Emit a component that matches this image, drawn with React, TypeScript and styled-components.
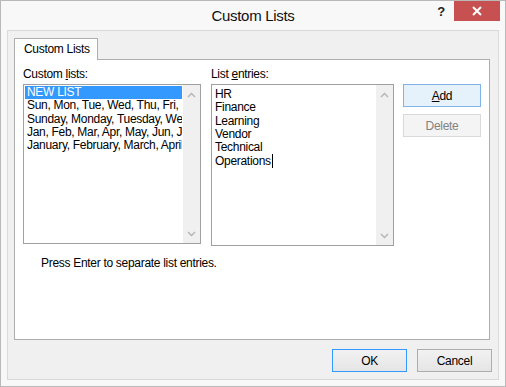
import styled, { createGlobalStyle } from "styled-components";

const GlobalStyle = createGlobalStyle`
  body {
    margin: 0;
    font-family: "Liberation Sans", Arial, sans-serif;
    font-size: 12px;
    letter-spacing: -0.3px;
    color: #000;
  }
`;

const customLists = [
  "NEW LIST",
  "Sun, Mon, Tue, Wed, Thu, Fri, Sat",
  "Sunday, Monday, Tuesday, Wednesday",
  "Jan, Feb, Mar, Apr, May, Jun, Jul",
  "January, February, March, April",
];

const entries = ["HR", "Finance", "Learning", "Vendor", "Technical", "Operations"];

const Chevron = ({ up }: { up?: boolean }) => (
  <svg width="9" height="6" viewBox="0 0 9 6">
    <polyline
      points={up ? "1,5 4.5,1.5 8,5" : "1,1 4.5,4.5 8,1"}
      fill="none"
      stroke="#b4b4b4"
      strokeWidth="1.4"
    />
  </svg>
);

const App = () => {
  return (
    <>
      <GlobalStyle />
      <Window>
        <TitleBar>
          <span />
          <Title>Custom Lists</Title>
          <Controls>
            <Help>?</Help>
            <CloseButton>
              <svg width="10" height="10" viewBox="0 0 10 10">
                <path d="M1 1 L9 9 M9 1 L1 9" stroke="#fff" strokeWidth="2" />
              </svg>
            </CloseButton>
          </Controls>
        </TitleBar>
        <Client>
          <TabStrip>
            <Tab>Custom Lists</Tab>
          </TabStrip>
          <Panel>
            <Columns>
              <Column $width={178}>
                <Label>
                  Custom <u>l</u>ists:
                </Label>
                <ListBox $height={160}>
                  <Rows>
                    {customLists.map((item, i) => (
                      <Row key={item} $selected={i === 0}>
                        {item}
                      </Row>
                    ))}
                  </Rows>
                  <ScrollTrack>
                    <Chevron up />
                    <Chevron />
                  </ScrollTrack>
                </ListBox>
              </Column>
              <Column $width={185}>
                <Label>
                  List <u>e</u>ntries:
                </Label>
                <ListBox $height={162}>
                  <Rows>
                    {entries.map((item, i) => (
                      <Entry key={item}>
                        {item}
                        {i === entries.length - 1 && <Caret />}
                      </Entry>
                    ))}
                  </Rows>
                  <ScrollTrack>
                    <Chevron up />
                    <Chevron />
                  </ScrollTrack>
                </ListBox>
              </Column>
              <ButtonColumn>
                <SideButton $variant="hot">
                  <u>A</u>dd
                </SideButton>
                <SideButton $variant="disabled">Delete</SideButton>
              </ButtonColumn>
            </Columns>
            <Hint>Press Enter to separate list entries.</Hint>
          </Panel>
          <Footer>
            <DialogButton $default>OK</DialogButton>
            <DialogButton>Cancel</DialogButton>
          </Footer>
        </Client>
      </Window>
    </>
  );
};

const Window = styled.div`
  width: 506px;
  height: 387px;
  box-sizing: border-box;
  border: 1px solid #b9b9b9;
  background: #f8f8f8;
  display: flex;
  flex-direction: column;
`;

const TitleBar = styled.div`
  height: 29px;
  display: grid;
  grid-template-columns: 1fr auto 1fr;
  align-items: start;
`;

const Title = styled.div`
  font-size: 15px;
  line-height: 29px;
  color: #111;
`;

const Controls = styled.div`
  display: flex;
  justify-content: flex-end;
  align-items: flex-start;
  gap: 9px;
  padding-right: 5px;
`;

const Help = styled.div`
  font-weight: bold;
  font-size: 13px;
  line-height: 22px;
  color: #222;
`;

const CloseButton = styled.div`
  width: 46px;
  height: 20px;
  background: #c75050;
  display: flex;
  align-items: center;
  justify-content: center;
`;

const Client = styled.div`
  flex: 1;
  margin: 0 6px 6px 6px;
  border: 1px solid #d9d9d9;
  background: #f0f0f0;
  padding: 7px 6px 7px 6px;
  display: flex;
  flex-direction: column;
`;

const TabStrip = styled.div`
  display: flex;
`;

const Tab = styled.div`
  position: relative;
  z-index: 1;
  width: 84px;
  height: 22px;
  margin-bottom: -1px;
  box-sizing: border-box;
  border: 1px solid #adadad;
  border-bottom: none;
  background: #fff;
  line-height: 21px;
  padding-left: 9px;
`;

const Panel = styled.div`
  height: 281px;
  box-sizing: border-box;
  margin-right: 2px;
  border: 1px solid #adadad;
  background: #fff;
  padding: 7px 8px 0 8px;
`;

const Columns = styled.div`
  display: flex;
  align-items: flex-start;
`;

const Column = styled.div<{ $width: number }>`
  width: ${p => p.$width}px;
  margin-right: 10px;
  display: flex;
  flex-direction: column;
`;

const Label = styled.div`
  line-height: 15px;
  height: 17px;
`;

const ListBox = styled.div<{ $height: number }>`
  height: ${p => p.$height}px;
  box-sizing: border-box;
  border: 1px solid #a0a0a0;
  display: flex;
  background: #fff;
`;

const Rows = styled.div`
  flex: 1;
  min-width: 0;
  padding: 1px 1px 0 1px;
  overflow: hidden;
`;

const Row = styled.div<{ $selected?: boolean }>`
  height: 13.25px;
  line-height: 13px;
  padding-left: 2px;
  white-space: nowrap;
  overflow: hidden;
  background: ${p => (p.$selected ? "#3399ff" : "transparent")};
  color: ${p => (p.$selected ? "#fff" : "#000")};
`;

const Entry = styled.div`
  height: 13.3px;
  line-height: 13px;
  padding-left: 2px;
  white-space: nowrap;
  display: flex;
  align-items: center;
  &:first-child {
    margin-top: 2px;
  }
`;

const Caret = styled.span`
  display: inline-block;
  width: 1px;
  height: 14px;
  background: #000;
  margin-left: 1px;
`;

const ScrollTrack = styled.div`
  width: 17px;
  background: #f0f0f0;
  display: flex;
  flex-direction: column;
  justify-content: space-between;
  align-items: center;
  padding: 7px 0 6px;
`;

const ButtonColumn = styled.div`
  margin-top: 17px;
  margin-left: -1px;
  display: flex;
  flex-direction: column;
  gap: 7px;
`;

const SideButton = styled.div<{ $variant: "hot" | "disabled" }>`
  width: 78px;
  height: 23px;
  box-sizing: border-box;
  display: flex;
  align-items: center;
  justify-content: center;
  border: 1px solid ${p => (p.$variant === "hot" ? "#7eb4ea" : "#d9d9d9")};
  background: ${p => (p.$variant === "hot" ? "#e5f1fb" : "#f4f4f4")};
  color: ${p => (p.$variant === "hot" ? "#000" : "#838383")};
`;

const Hint = styled.div`
  margin-top: 10px;
  padding-left: 18px;
  line-height: 15px;
`;

const Footer = styled.div`
  margin-top: 9px;
  display: flex;
  justify-content: flex-end;
  gap: 10px;
`;

const DialogButton = styled.div<{ $default?: boolean }>`
  width: 75px;
  height: 23px;
  box-sizing: border-box;
  display: flex;
  align-items: center;
  justify-content: center;
  border: 1px solid ${p => (p.$default ? "#3399ff" : "#adadad")};
  background: linear-gradient(#f2f2f2, #e5e5e5);
`;

export default App;
